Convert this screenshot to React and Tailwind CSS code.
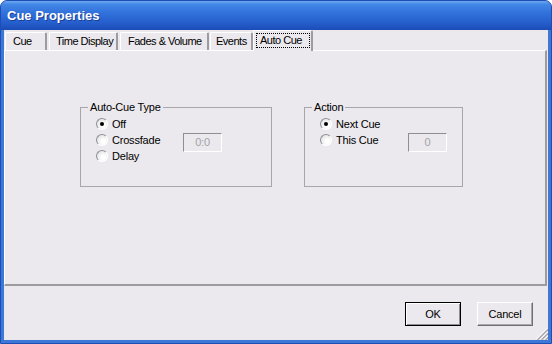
const tabs = [
  { label: 'Cue', className: 'ml-px w-[42px] pl-[7px]' },
  { label: 'Time Display', className: 'ml-[2px] w-[69px] pl-[6px]' },
  { label: 'Fades & Volume', className: 'ml-[2px] w-[89px] pl-[7px]' },
  { label: 'Events', className: 'ml-px w-[43px] pl-[5px]' },
]

function Radio({ checked }) {
  return (
    <span className="w-[12px] h-[12px] shrink-0 rounded-full border border-t-[#8f8f93] border-l-[#8f8f93] border-r-white border-b-white bg-[radial-gradient(circle_at_65%_65%,#ffffff_20%,#d9d8dd_100%)] flex items-center justify-center">
      {checked && <span className="w-[4px] h-[4px] rounded-full bg-black" />}
    </span>
  )
}

function RadioRow({ label, checked, value, labelWidth }) {
  return (
    <div className="flex items-center h-[16px]">
      <div className={`flex items-center gap-[4px] shrink-0 whitespace-nowrap ${labelWidth}`}>
        <Radio checked={checked} />
        <span>{label}</span>
      </div>
      {value !== undefined && (
        <div className="w-[39px] h-[19px] mt-[5px] shrink-0 border border-t-[#8f8f93] border-l-[#8f8f93] border-r-white border-b-white flex items-center justify-center text-[#a3a3a6]">
          {value}
        </div>
      )}
    </div>
  )
}

function GroupBox({ title, className, children }) {
  return (
    <fieldset className={`h-[86px] border border-[#a7a6aa] ${className}`}>
      <legend className="ml-[7px] px-[2px] leading-[13px] whitespace-nowrap">{title}</legend>
      <div className="flex flex-col">{children}</div>
    </fieldset>
  )
}

function SizeGrip() {
  return (
    <svg width="12" height="12" viewBox="0 0 12 12" className="absolute right-0 bottom-0">
      <g stroke="#ffffff" strokeWidth="1">
        <line x1="11" y1="0.5" x2="0.5" y2="11" />
        <line x1="11" y1="4.5" x2="4.5" y2="11" />
        <line x1="11" y1="8.5" x2="8.5" y2="11" />
      </g>
      <g stroke="#a09fa3" strokeWidth="1.2">
        <line x1="12" y1="1.5" x2="1.5" y2="12" />
        <line x1="12" y1="5.5" x2="5.5" y2="12" />
        <line x1="12" y1="9.5" x2="9.5" y2="12" />
      </g>
    </svg>
  )
}

export default function App() {
  return (
    <div className="w-[552px] h-[344px] bg-white font-['Liberation_Sans',Arial,sans-serif] text-[11px] text-black tracking-[-0.2px]">
      <div className="h-full flex flex-col rounded-t-[7px] overflow-hidden border border-[#1e4db3] bg-[#3d78d8]">
        {/* title bar */}
        <div className="h-[29px] shrink-0 flex items-center pl-[6px] bg-[linear-gradient(to_bottom,#6ea8f0_0%,#4287e6_12%,#3272dc_40%,#2660cf_72%,#1c4cb6_100%)]">
          <span className="text-white font-bold text-[13px] tracking-normal [text-shadow:1px_1px_0_#1a3f95]">
            Cue Properties
          </span>
        </div>

        {/* client area */}
        <div className="flex-1 mx-[3px] mb-[3px] bg-[#ebe9ed] flex flex-col relative">
          {/* tab strip */}
          <div className="h-[20px] flex items-end shrink-0 whitespace-nowrap tracking-[-0.5px]">
            {tabs.map(tab => (
              <div
                key={tab.label}
                className={`h-[18px] shrink-0 flex items-center border-t border-l border-white border-r-2 border-r-[#9c9ba0] rounded-t-[2px] ${tab.className}`}
              >
                {tab.label}
              </div>
            ))}
            <div className="relative z-10 h-[21px] -mb-px w-[60px] shrink-0 border-t border-l border-white border-r-2 border-r-[#9c9ba0] rounded-t-[2px] bg-[#ebe9ed] pt-[2px] pl-[2px]">
              <div className="w-[54px] h-[15px] border border-dotted border-black flex items-center pl-[3px]">
                Auto Cue
              </div>
            </div>
          </div>

          {/* panel */}
          <div className="h-[236px] shrink-0 mr-px border-t border-l border-white border-r-2 border-b-2 border-r-[#9c9ba0] border-b-[#9c9ba0] flex items-start pt-[50px] pl-[75px]">
            <GroupBox title="Auto-Cue Type" className="w-[192px]">
              <div className="pl-[15px] pt-[2px] flex flex-col">
                <RadioRow label="Off" checked labelWidth="w-[87px]" />
                <RadioRow label="Crossfade" value="0:0" labelWidth="w-[87px]" />
                <RadioRow label="Delay" labelWidth="w-[87px]" />
              </div>
            </GroupBox>
            <GroupBox title="Action" className="w-[159px] ml-[32px]">
              <div className="pl-[15px] pt-[2px] flex flex-col">
                <RadioRow label="Next Cue" checked labelWidth="w-[88px]" />
                <RadioRow label="This Cue" value="0" labelWidth="w-[88px]" />
              </div>
            </GroupBox>
          </div>

          {/* buttons */}
          <div className="flex justify-end gap-[16px] pt-[16px] pr-[15px]">
            <button
              type="button"
              className="w-[56px] h-[24px] border border-black bg-[#ebe9ed] shadow-[inset_1px_1px_0_#ffffff,inset_-1px_-1px_0_#8f8f93]"
            >
              OK
            </button>
            <button
              type="button"
              className="w-[56px] h-[24px] border border-t-white border-l-white border-r-[#6f6f73] border-b-[#6f6f73] bg-[#ebe9ed] shadow-[inset_-1px_-1px_0_#a9a8ac]"
            >
              Cancel
            </button>
          </div>
          <SizeGrip />
        </div>
      </div>
    </div>
  )
}
